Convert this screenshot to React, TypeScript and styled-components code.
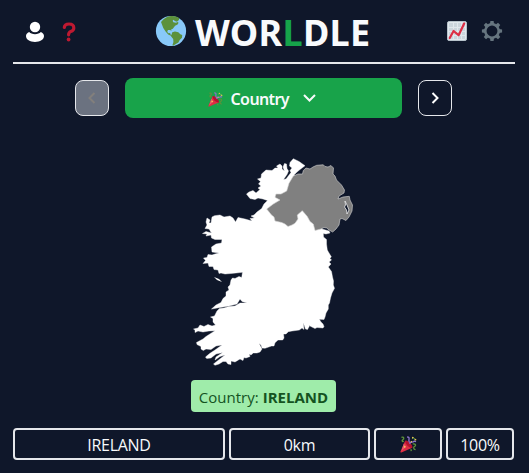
import React from "react";
import styled, { createGlobalStyle } from "styled-components";

const GlobalStyle = createGlobalStyle`
  * { box-sizing: border-box; }
  html, body { margin: 0; background: #0f172a; }
  body { font-family: "Open Sans", "Noto Sans", sans-serif; color: #f8fafc; overflow: hidden; }
`;

const Page = styled.main`
  width: 529px;
  height: 473px;
  padding: 0 14px 0 13px;
  display: flex;
  flex-direction: column;
  background: #0f172a;
`;

const Header = styled.header`
  height: 64px;
  border-bottom: 2px solid #e5e7eb;
  display: flex;
  align-items: center;
  justify-content: space-between;
`;

const HeaderGroup = styled.div<{ $side: "left" | "right" }>`
  display: flex;
  align-items: center;
  width: 90px;
  gap: ${(p) => (p.$side === "left" ? "17px" : "14px")};
  justify-content: ${(p) => (p.$side === "left" ? "flex-start" : "flex-end")};
  padding: ${(p) => (p.$side === "left" ? "2px 0 0 12px" : "0 12px 0 0")};
`;

const IconButton = styled.button`
  padding: 0;
  border: 0;
  background: none;
  display: flex;
  svg { display: block; }
`;

const Brand = styled.div`
  display: flex;
  align-items: center;
  gap: 8px;
  svg { display: block; }
`;

const Title = styled.h1`
  margin: 0;
  width: 178px;
  white-space: nowrap;
  font: 700 36px/40px "Noto Sans", "Open Sans", sans-serif;
  letter-spacing: 0.3px;
  padding-top: 3px;
`;

const Accent = styled.span`
  color: #16a34a;
`;

const RoundNav = styled.nav`
  height: 40px;
  margin-top: 14px;
  display: flex;
  align-items: center;
  gap: 16px;
  padding-left: 62px;
`;

const StepButton = styled.button<{ $off?: boolean }>`
  width: 34px;
  height: 36px;
  padding: 0;
  border: 1px solid #e5e7eb;
  border-radius: 8px;
  background: ${(p) => (p.$off ? "#6b7280" : "transparent")};
  color: ${(p) => (p.$off ? "#827f7c" : "#fff")};
  display: grid;
  place-items: center;
`;

const RoundButton = styled.button`
  width: 277px;
  height: 40px;
  padding: 2px 4px 0 0;
  border: 0;
  border-radius: 8px;
  background: #18a34a;
  color: #f8fafc;
  display: flex;
  align-items: center;
  justify-content: center;
  font: 600 16px/24px "Noto Sans", "Open Sans", sans-serif;
  letter-spacing: -0.6px;
`;

const RoundLabel = styled.span`
  width: 60px;
  margin: 0 12px 0 8px;
  text-align: left;
  white-space: nowrap;
`;

const MapArea = styled.section`
  height: 262px;
  padding: 37px 0 0 177px;
  svg { display: block; }
`;

const Answer = styled.div`
  align-self: flex-start;
  margin-left: 178px;
  width: 145px;
  height: 32px;
  border-radius: 4px;
  background: #9fecaa;
  color: #14531f;
  text-align: center;
  white-space: nowrap;
  font-size: 15px;
  line-height: 35px;
  letter-spacing: 0.02px;
`;

const Guess = styled.div`
  margin-top: 16px;
  display: grid;
  grid-template-columns: 212px 141px 68px 68px;
  gap: 4px;
`;

const Cell = styled.div`
  height: 32px;
  border: 2px solid #e5e7eb;
  border-radius: 4px;
  display: flex;
  align-items: center;
  justify-content: center;
  font-size: 16px;
  line-height: 24px;
  letter-spacing: -0.3px;
  padding-top: 2px;
  svg { margin-top: -2px; }
`;

const UserIcon = () => (
  <svg width="20" height="22" viewBox="0 0 20 22" fill="#fff">
    <circle cx="10" cy="6" r="5.2" />
    <path d="M4.2 11C2.1 12 1 13.3 1 15.1C1 18.6 5 21 10 21s9-2.4 9-5.9c0-1.8-1.1-3.1-3.2-4.1C14.6 12.4 12.500 13.200 10 13.200S5.400 12.400 4.200 11z" />
  </svg>
);

const QuestionIcon = () => (
  <svg width="14" height="20" viewBox="0 0 14 20">
    <path d="M2.300 5.500C2.500 3.200 4.300 2 7 2c3 0 4.800 1.500 4.800 3.900 0 2-1.300 2.900-3 3.500C7 10.200 6.600 10.900 6.600 12.800" fill="none" stroke="#be1931" strokeWidth="3.200" strokeLinecap="round" />
    <circle cx="6.600" cy="17.500" r="1.900" fill="#be1931" />
  </svg>
);

const GlobeIcon = () => (
  <svg width="32" height="32" viewBox="0 0 32 32">
    <circle cx="16" cy="16" r="15.100" fill="#88c9f9" />
    <path d="M6 7C9 3.300 12 1.600 16 1.100c3.200-.2 5.800.5 8.200 2l-.3 2-1.900 1.600-2.200-.6-1.200-1.400-1 1 .8 1.600 2.600.4 1.600-.7 1 .8-1 1.800-2.500 1.200-2.300 2.900-1.700.7.300 1.500-1.200-1-2.300.2-.7 2 1.400 1.200 1.500-.4.400 1.600 1.800 1-.9.500-3.200-1.600-2.600-3-2.300-3.500z" fill="#5c913b" />
    <path d="m17.300 17.200 2.700-.8 3.300.8 2 2.100 1.900.8-.2 2.700-2.300 2.300-1.300 2.500-3 1.600-2.200 1.600-.8-.5 1-3.300-.2-3.100-2.200-2.700z" fill="#5c913b" />
  </svg>
);

const ChartIcon = () => (
  <svg width="20" height="20" viewBox="0 0 20 20">
    <rect x=".5" y=".5" width="19" height="19" rx="1.600" fill="#e1e8ed" stroke="#b7c3cb" />
    <path d="M2 2h4v4H2zM7 2h3v4H7zM11 2h3v4h-3zM15 2h3v4h-3zM2 7h4v3H2zM7 7h3v3H7zM11 7h3v3h-3zM15 7h3v3h-3zM2 11h4v3H2zM7 11h3v3H7zM11 11h3v3h-3zM15 11h3v3h-3zM2 15h4v3H2zM7 15h3v3H7zM11 15h3v3h-3zM15 15h3v3h-3z" fill="#ccd6dd" />
    <path d="m2.700 17 3.900-7 5 4.200L17.200 2.500" fill="none" stroke="#dd2e44" strokeWidth="2.200" strokeLinecap="round" strokeLinejoin="round" />
  </svg>
);

const TEETH = [0, 45, 90, 135, 180, 225, 270, 315];

const GearIcon = () => (
  <svg width="22" height="22" viewBox="-11 -11 22 22">
    <circle r="6.700" fill="none" stroke="#66757f" strokeWidth="2.500" />
    {TEETH.map((angle) => (
      <path key={angle} d="M-2-7-1.600-10.100H1.600L2-7z" fill="#66757f" transform={`rotate(${angle})`} />
    ))}
  </svg>
);

const PartyIcon = ({ size }: { size: number }) => (
  <svg width={size} height={size} viewBox="0 0 36 36">
    <path d="M11 10 1 33c-.5 1.500.5 2.500 2 2l23-10C23 18 18 12 11 10z" fill="#dd2e44" />
    <path d="M11 10c-1 5 7 16 15 15 3-4-10-18-15-15z" fill="#b5122d" />
    <path d="m8 16-5 16 10-9z" fill="#ea596e" />
    <path d="M3 3c6-2 6 3 3 5s-1 5 2 3M27 17c7-1 7 4 4 5s-3 6 2 7M23 28l1 4" fill="none" stroke="#5c913b" strokeWidth="2.800" />
    <path d="M15 2c7 0 3 5 4 9 1 3 3 1 3 5M20 16c4-5 6-1 10-5l4 1" fill="none" stroke="#8a72c8" strokeWidth="2.900" />
    <path d="m26 6 2-3 2 3 3 1-3 2" fill="none" stroke="#77b255" strokeWidth="2" />
    <g fill="#ffcc4d"><circle cx="27" cy="3" r="1.500" /><circle cx="33" cy="8" r="1.700" /><circle cx="10" cy="23" r="1.800" /><circle cx="24" cy="12" r="1.500" /></g>
  </svg>
);

const Chevron = ({ d, w = 12, h = 12 }: { d: string; w?: number; h?: number }) => (
  <svg width={w} height={h} viewBox={`0 0 ${w} ${h}`} fill="none" stroke="currentColor" strokeWidth="2">
    <path d={d} />
  </svg>
);

const IrelandMap = () => (
  <svg width="166" height="215" viewBox="190 155 166 215">
    <path
      fill="#fff"
      stroke="#fff"
      strokeWidth=".4"
      d="M293.300 158.700 297 160.500 299 161.500 305 165.700 302 168 300 169.500 297 172 294 175 300 190 318 205 322 229 329 231 330 233 326 234 323.300 233.500 323.500 237 326.500 239.500 326.500 244 327.300 250 329 253 331.300 256.700 330 258.500 331.500 260 329 262 331 264 328.300 267 331.500 271.500 332.500 277 333.500 281 333.300 285 334.500 288.300 332 293 330.500 298 329.500 303 328.300 305 328.300 309 326 313 325 317 324 319.500 319.300 319.300 321 322 323 324 324 326.500 323 328 317 327.500 315 328.500 310 326 310 325 307.500 329.500 305.500 329 303.300 322.500 304 329.500 302 328 299.300 330 292 331 288.300 331.700 286 334 283.500 334 284 338 282.700 340 278 340 275 342.700 274 346 271.500 346 265 348.300 262 348 261 345 259 343.500 262 349 260 352 257 353 253.300 353 251 355 249 354 250 356.500 246 358 244 357.500 243 360.500 240 359 235 362 231 361 231 364.500 228 364 226 361.500 223 361.500 219 364 215 365.300 213.500 364 225 355 220 356.500 215 360 216 357 222.700 352.500 216 354 211 358 206.700 358.500 205.500 357 210 353.300 215 350 222 345 216 346 211 349.500 206 349 203.300 350.500 201 349 201 346.500 197 344.500 196.500 342.500 203 339 206 336.500 215 330.700 209 331 203 332 198 331 195 332.500 195 330 193.500 329 198 328 200 325 204 326.500 208 324.500 212 326 215.500 325 213 322 213 318.500 210.500 317 214.500 316 217 311 219.500 308.500 224 308 229 306.500 235 306 240 303 247 303 242 301.500 240 299 237 304 229 306 220 307.500 211.500 309 216 305 221 302.500 223 298.500 226 296 226 292 229 290 228 287 230 285 231 280 232.500 278 235 278.500 239 276.500 241.700 277.500 242.500 272.300 236 273 231 273.500 225 274 221 273 219 273.500 218 270 214 269.500 213 266.500 209 266.500 208 263 203 263.500 205.500 260.500 203.500 258 207 257.500 208 254.500 212 255 215 254 219 253 212 252 211.500 247 216 244 221.500 243 222 239.500 215 239.500 211.500 238 211 235 206 236 207 234 202.500 233.500 206 231.500 211.500 233 209 229 205 228.500 207 225 206 222 207 218 210 220 209 223 211 223 212 217 214.500 215.700 220 215 224 217 230 216 233 218 235.500 222 238 217.500 245 219 252 221 250 218.500 254.500 218 251 216 254 215 257 212 261.700 208.500 264 204 267.500 200.500 263 199 258 198 255 199.500 250 198.500 248 196 246.500 194 249 192 253 190.500 256 193 260 189.500 258 188 261 186 258.500 184 260.500 181.500 257.500 179 261 178 261.500 174 266 170 272 170.500 275 168 278 168 276.500 166 280 164 282 166 282 169 284.500 171 283 167 284.500 163.500 286.500 164 287 168.500 288.500 171 287 174.500 283.500 179.500 286 179 291 172.500 290 170.500 292 168 289.500 166 290 162.500z"
    />
    <path d="m214 277 5 2 3 3-5-2z" fill="#fff" />
    <path
      fill="#808080"
      stroke="#d5d5d5"
      strokeWidth=".6"
      d="M302.500 174 303.300 170.500 306 168 310 169 313 167 316.700 165.300 323.300 164.800 325 166.500 328 167 331 165.500 333.500 168 333 174 335 176 336.500 180 341.500 185 344.500 190 344 193 339 196 338 199 343 197 349.300 196.300 350 200 352.500 205 352 211 349 217 346 220.500 342 218.500 340 219 339 225 336 229 332.700 232 329 230 326.700 228 324 227.500 321 229 315 230.500 313.300 224 310 221.500 307.300 216.500 302.300 210.700 297.300 215 298 219 295 223.300 292 225 288 226.500 285 224 281.700 222.500 275 221 274 217 271.500 215 266.700 209 273.300 204 280 200 275 197.300 276 194 281 194 286.700 191 289 183.300 293.300 176 298 174z"
    />
    <path d="m345 201 2 4 2 5-2 4-.5-4-2-3 1-2z" fill="#0f172a" stroke="#eee" strokeWidth=".8" />
  </svg>
);

export default function App() {
  return (
    <>
      <GlobalStyle />
      <Page>
        <Header>
          <HeaderGroup $side="left">
            <IconButton aria-label="Profile"><UserIcon /></IconButton>
            <IconButton aria-label="Help"><QuestionIcon /></IconButton>
          </HeaderGroup>
          <Brand>
            <GlobeIcon />
            <Title>WOR<Accent>L</Accent>DLE</Title>
          </Brand>
          <HeaderGroup $side="right">
            <IconButton aria-label="Statistics"><ChartIcon /></IconButton>
            <IconButton aria-label="Settings"><GearIcon /></IconButton>
          </HeaderGroup>
        </Header>
        <RoundNav>
          <StepButton $off disabled aria-label="Previous"><Chevron d="M8.500 1 3.500 6l5 5" /></StepButton>
          <RoundButton>
            <PartyIcon size={15} />
            <RoundLabel>Country</RoundLabel>
            <Chevron d="m1 1 5.500 5.500L12 1" w={13} h={10} />
          </RoundButton>
          <StepButton aria-label="Next"><Chevron d="m3.500 1 5 5-5 5" /></StepButton>
        </RoundNav>
        <MapArea><IrelandMap /></MapArea>
        <Answer>Country: <b>IRELAND</b></Answer>
        <Guess>
          <Cell>IRELAND</Cell>
          <Cell>0km</Cell>
          <Cell><PartyIcon size={17} /></Cell>
          <Cell>100%</Cell>
        </Guess>
      </Page>
    </>
  );
}
